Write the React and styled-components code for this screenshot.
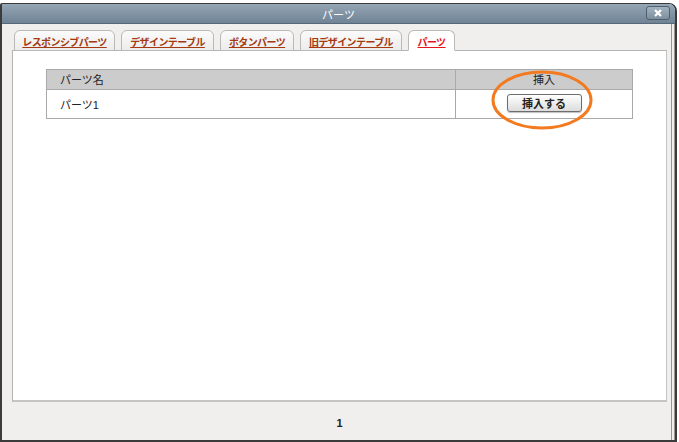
import React from 'react'
import styled, { createGlobalStyle } from 'styled-components'

const GlobalStyle = createGlobalStyle`
  html, body {
    margin: 0;
    padding: 0;
    background: #ffffff;
    font-family: 'Liberation Sans', 'Noto Sans CJK JP', sans-serif;
  }
`

const Page = styled.div`
  width: 679px;
  height: 442px;
  padding-top: 3px;
  box-sizing: border-box;
  overflow: hidden;
`

const Window = styled.div`
  width: 677px;
  height: 439px;
  box-sizing: border-box;
  border: 2px solid #3b3b3b;
  border-top-width: 1px;
  border-radius: 2px 8px 0 0;
  background: #f0efed;
  display: flex;
  flex-direction: column;
  overflow: hidden;
`

const TitleBar = styled.div`
  height: 19px;
  flex-shrink: 0;
  position: relative;
  display: flex;
  align-items: center;
  justify-content: center;
  background: linear-gradient(#95a6b5, #6f8395);
  border-bottom: 1px solid #56697a;
  color: #ffffff;
  font-size: 11px;
`

const CloseButton = styled.button`
  position: absolute;
  right: 5px;
  top: 2px;
  width: 24px;
  height: 14px;
  padding: 0;
  border: 1px solid #4e5f6e;
  border-radius: 3px;
  background: linear-gradient(#a3b2bf, #7d8e9d);
  display: flex;
  align-items: center;
  justify-content: center;
`

const Body = styled.div`
  flex: 1;
  display: flex;
  flex-direction: column;
  padding: 6px 4px 0 10px;
  border-right: 4px double #9a948e;
  min-height: 0;
`

const TabRow = styled.div`
  display: flex;
  gap: 6px;
  padding-left: 2px;
  height: 21px;
  position: relative;
  z-index: 1;
`

const Tab = styled.div`
  width: ${p => p.$width}px;
  height: 21px;
  box-sizing: border-box;
  display: flex;
  align-items: center;
  justify-content: center;
  padding-top: 1px;
  border: 1px solid #b9b9b9;
  border-bottom: ${p => (p.$active ? '1px solid #ffffff' : '1px solid #b9b9b9')};
  border-radius: 6px 6px 0 0;
  background: ${p => (p.$active ? '#ffffff' : 'linear-gradient(#fbfbfb, #ececec)')};
  font-size: 10px;
  letter-spacing: -0.6px;
  font-weight: bold;
  color: ${p => (p.$active ? '#e8141b' : '#a5390f')};
  text-decoration: underline;
  white-space: nowrap;
`

const Panel = styled.div`
  flex: 1;
  margin-top: -1px;
  background: #ffffff;
  border: 1px solid #b4b4b4;
  border-right-color: #c4c4c4;
  border-bottom: 2px solid #c4c4c4;
  padding: 18px 34px 0 33px;
`

const Table = styled.table`
  width: 587px;
  border-collapse: collapse;
  font-size: 11px;
  color: #222;
`

const HeadCell = styled.th`
  height: 19px;
  padding: 0 13px;
  background: #cccccc;
  border: 1px solid #a9a9a9;
  font-weight: normal;
  text-align: ${p => p.$align || 'left'};
  width: ${p => p.$width || 'auto'};
  line-height: 14px;
`

const Cell = styled.td`
  height: 28px;
  padding: 0 13px;
  border: 1px solid #a9a9a9;
  text-align: ${p => p.$align || 'left'};
  position: relative;
`

const InsertButton = styled.button`
  width: 75px;
  height: 18px;
  margin-top: -3px;
  border: 1px solid #6d6d6d;
  border-radius: 3px;
  background: linear-gradient(#ffffff, #dcdcdc);
  box-shadow: 0 1px 1px rgba(0, 0, 0, 0.25);
  font-family: 'Liberation Sans', 'Noto Sans CJK JP', sans-serif;
  font-size: 11px;
  font-weight: bold;
  color: #222;
  padding: 0;
`

const Highlight = styled.svg`
  position: absolute;
  left: 35px;
  top: -19px;
  pointer-events: none;
  overflow: visible;
`

const Footer = styled.div`
  height: 38px;
  flex-shrink: 0;
  display: flex;
  align-items: center;
  justify-content: center;
  padding-top: 4px;
  box-sizing: border-box;
  font-size: 11px;
  font-weight: bold;
  color: #222;
`

const tabs = [
  { label: 'レスポンシブパーツ', width: 101 },
  { label: 'デザインテーブル', width: 93 },
  { label: 'ボタンパーツ', width: 74 },
  { label: '旧デザインテーブル', width: 102 },
  { label: 'パーツ', width: 47, active: true },
]

export default function App() {
  return (
    <>
      <GlobalStyle />
      <Page>
        <Window>
          <TitleBar>
            パーツ
            <CloseButton aria-label="close">
              <svg width="10" height="8" viewBox="0 0 10 8">
                <path d="M2 1 L8 7 M8 1 L2 7" stroke="#ffffff" strokeWidth="2.2" />
              </svg>
            </CloseButton>
          </TitleBar>
          <Body>
            <TabRow>
              {tabs.map((t, i) => (
                <Tab key={i} $active={t.active} $width={t.width}>
                  {t.label}
                </Tab>
              ))}
            </TabRow>
            <Panel>
              <Table>
                <thead>
                  <tr>
                    <HeadCell>パーツ名</HeadCell>
                    <HeadCell $align="center" $width="150px">
                      挿入
                    </HeadCell>
                  </tr>
                </thead>
                <tbody>
                  <tr>
                    <Cell>パーツ1</Cell>
                    <Cell $align="center">
                      <InsertButton>挿入する</InsertButton>
                      <Highlight width="104" height="60" viewBox="0 0 104 60">
                        <ellipse
                          cx="51"
                          cy="29"
                          rx="49"
                          ry="28"
                          fill="none"
                          stroke="#f37a1f"
                          strokeWidth="3"
                        />
                      </Highlight>
                    </Cell>
                  </tr>
                </tbody>
              </Table>
            </Panel>
            <Footer>1</Footer>
          </Body>
        </Window>
      </Page>
    </>
  )
}
